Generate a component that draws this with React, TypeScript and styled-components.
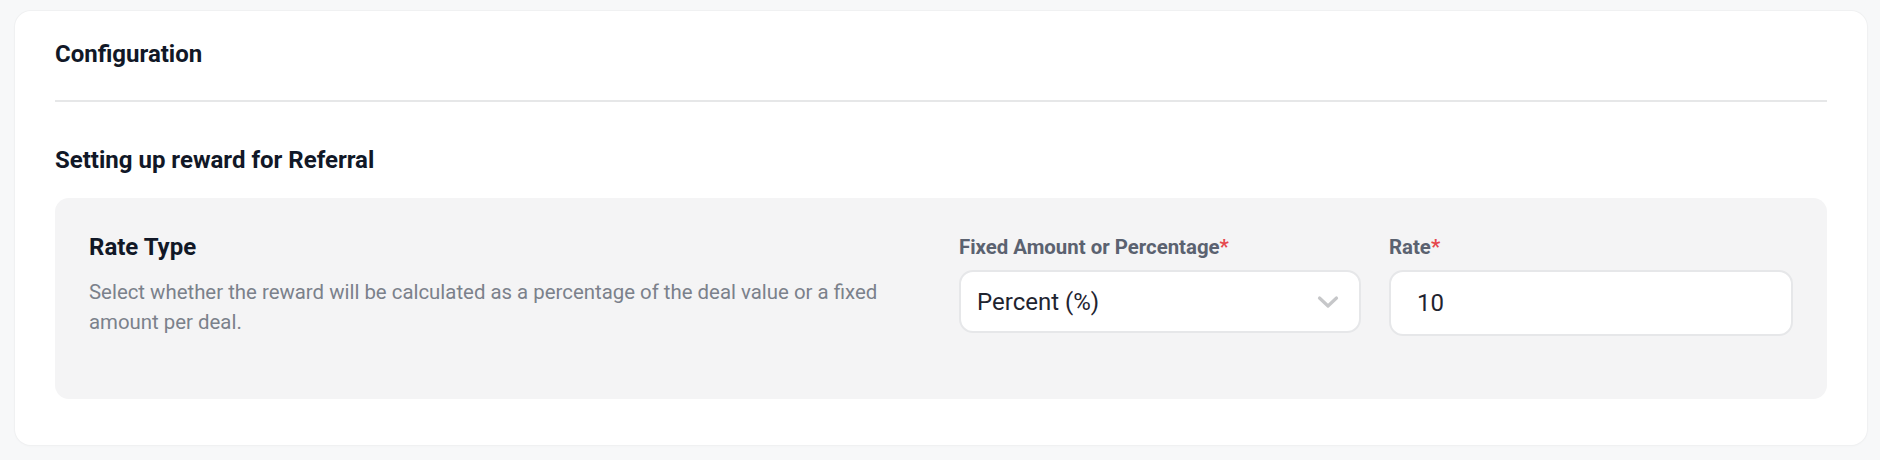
import React from "react";
import styled, { createGlobalStyle } from "styled-components";

const Global = createGlobalStyle`
  html, body { margin: 0; padding: 0; background: #f7f8f9; }
  body { font-family: Roboto, "Noto Sans", "Liberation Sans", sans-serif; }
  * { box-sizing: border-box; }
`;

const Page = styled.div`
  padding: 11px 13px 17px 15px;
`;

const Card = styled.section`
  background: #ffffff;
  border-radius: 16px;
  box-shadow: 0 0 0 1px #f0f1f2, 0 1px 3px rgba(0, 0, 0, 0.03);
  padding: 0 40px 46px;
`;

const Header = styled.div`
  padding: 27px 0 30px;
  border-bottom: 2px solid #e6e7e8;
`;

const Title = styled.h2`
  margin: 0;
  font-size: 24px;
  line-height: 32px;
  font-weight: 700;
  color: #111827;
`;

const SubTitle = styled(Title)`
  margin: 42px 0 22px;
`;

const Panel = styled.div`
  background: #f4f4f5;
  border-radius: 14px;
  padding: 33px 34px 62px;
  display: flex;
  gap: 40px;
`;

const Info = styled.div`
  flex: 1;
  min-width: 0;
`;

const InfoTitle = styled.h3`
  margin: 0;
  font-size: 24px;
  line-height: 32px;
  font-weight: 700;
  color: #111827;
`;

const Description = styled.p`
  margin: 14px 0 0;
  font-size: 20.4px;
  line-height: 30px;
  color: #7b818b;
`;

const Fields = styled.div`
  display: flex;
  gap: 28px;
`;

const Field = styled.div<{ $w: number }>`
  width: ${(p) => p.$w}px;
  display: flex;
  flex-direction: column;
  gap: 7px;
`;

const Label = styled.label`
  font-size: 20.4px;
  line-height: 32px;
  font-weight: 700;
  color: #5b6270;
`;

const Required = styled.span`
  color: #e5484d;
`;

const SelectBox = styled.div`
  height: 63px;
  border: 2px solid #e6e7e9;
  border-radius: 14px;
  background: #ffffff;
  display: flex;
  align-items: center;
  justify-content: space-between;
  padding: 0 20px 0 16px;
  font-size: 24px;
  color: #1f2430;
`;

const Input = styled.div`
  height: 66px;
  border: 2px solid #e6e7e9;
  border-radius: 14px;
  background: #ffffff;
  display: flex;
  align-items: center;
  padding: 0 26px;
  font-size: 24px;
  color: #1f2430;
`;

const Chevron = () => (
  <svg width="22" height="14" viewBox="0 0 22 14" fill="none">
    <path d="M2.5 3 L11 11 L19.5 3" stroke="#c6c7c9" strokeWidth="3.2" strokeLinecap="round" strokeLinejoin="round" />
  </svg>
);

export default function App() {
  return (
    <Page>
      <Global />
      <Card>
        <Header>
          <Title>Configuration</Title>
        </Header>
        <SubTitle>Setting up reward for Referral</SubTitle>
        <Panel>
          <Info>
            <InfoTitle>Rate Type</InfoTitle>
            <Description>
              Select whether the reward will be calculated as a percentage of the deal value or a fixed amount per deal.
            </Description>
          </Info>
          <Fields>
            <Field $w={402}>
              <Label>
                Fixed Amount or Percentage<Required>*</Required>
              </Label>
              <SelectBox>
                <span>Percent (%)</span>
                <Chevron />
              </SelectBox>
            </Field>
            <Field $w={404}>
              <Label>
                Rate<Required>*</Required>
              </Label>
              <Input>10</Input>
            </Field>
          </Fields>
        </Panel>
      </Card>
    </Page>
  );
}
